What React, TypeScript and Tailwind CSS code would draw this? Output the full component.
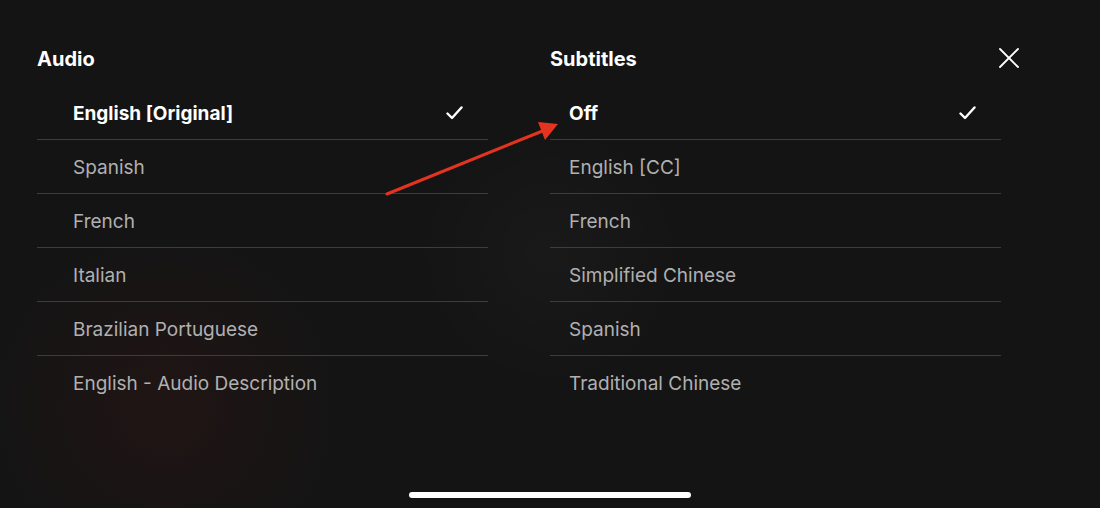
import { X } from 'lucide-react';

const audio = ['English [Original]', 'Spanish', 'French', 'Italian', 'Brazilian Portuguese', 'English - Audio Description'];
const subtitles = ['Off', 'English [CC]', 'French', 'Simplified Chinese', 'Spanish', 'Traditional Chinese'];

const Check = () => (
  <svg width="17" height="14" viewBox="0 0 17 14" fill="none">
    <path d="M1.5 7.5 L6 12 L15.5 1.5" stroke="white" strokeWidth="2.4" strokeLinecap="round" strokeLinejoin="round" />
  </svg>
);

const OptionList = ({ title, items, selected, indent }: { title: string; items: string[]; selected: number; indent: string }) => (
  <div className="w-[451px] flex flex-col">
    <p className="h-[24px] leading-[24px] text-[20px] font-bold text-white">{title}</p>
    <ul className="mt-[15px] flex flex-col">
      {items.map((item, i) => (
        <li
          key={item}
          className={`h-[54px] flex items-center justify-between pt-[3px] pr-[25px] ${indent} ${i < items.length - 1 ? 'border-b border-[#3d3d3d]' : ''}`}
        >
          <span className={i === selected ? 'text-[19px] font-bold text-white' : 'text-[19px] text-[#b0b0b0]'}>{item}</span>
          {i === selected && (
            <span className="-mt-[3px]">
              <Check />
            </span>
          )}
        </li>
      ))}
    </ul>
  </div>
);

export default function App() {
  return (
    <div
      className="relative w-[1100px] h-[508px] overflow-hidden bg-[#141414] bg-[radial-gradient(circle_at_15%_80%,rgba(90,25,25,0.18),transparent_18%),radial-gradient(circle_at_50%_50%,rgba(255,255,255,0.025),transparent_22%)]"
      style={{ fontFamily: 'Inter, "Noto Sans", sans-serif' }}
    >
      <div className="flex pl-[37px] pt-[47px] gap-[62px]">
        <OptionList title="Audio" items={audio} selected={0} indent="pl-[36px]" />
        <div className="flex">
          <OptionList title="Subtitles" items={subtitles} selected={0} indent="pl-[19px]" />
          <button className="-ml-[10px] -mt-[7px] h-[36px] w-[36px] flex items-center justify-center text-white">
            <X size={36} strokeWidth={1.2} />
          </button>
        </div>
      </div>

      {/* annotation arrow */}
      <svg className="absolute inset-0 pointer-events-none" width="1100" height="508">
        <line x1="387" y1="194" x2="545" y2="130" stroke="#e4341f" strokeWidth="3" strokeLinecap="round" />
        <polygon points="558,124 538,122 545,140" fill="#e4341f" />
      </svg>

      {/* home indicator */}
      <div className="absolute left-[409px] bottom-[10px] w-[282px] h-[6px] rounded-full bg-white" />
    </div>
  );
}
